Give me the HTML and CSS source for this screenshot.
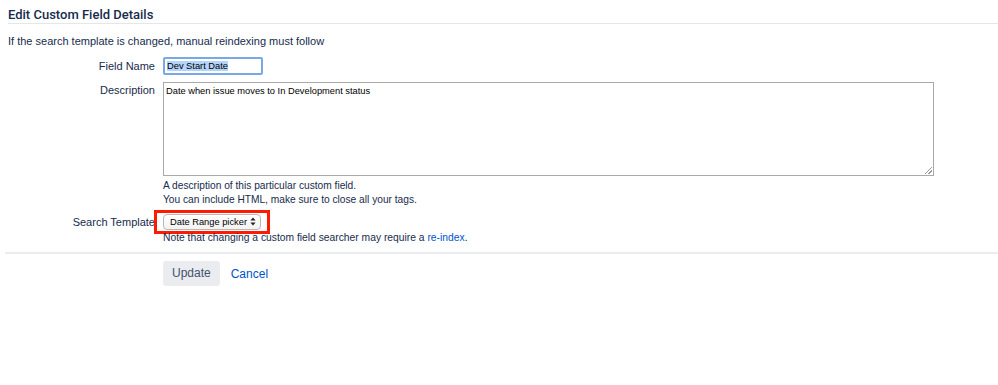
FILE: index.html
```html
<!DOCTYPE html>
<html>
<head>
<meta charset="utf-8">
<link rel="stylesheet" href="styles.css">
</head>
<body>
<div class="page">
  <h2 class="title">Edit Custom Field Details</h2>
  <p class="intro">If the search template is changed, manual reindexing must follow</p>
  <form class="form">
    <div class="row row-name">
      <label class="label">Field Name</label>
      <div class="field"><span class="text-input"><span class="sel">Dev Start Date</span></span></div>
    </div>
    <div class="row row-desc">
      <label class="label">Description</label>
      <div class="field">
        <div class="textarea">Date when issue moves to In Development status<span class="grip"></span></div>
        <div class="help">A description of this particular custom field.<br>You can include HTML, make sure to close all your tags.</div>
      </div>
    </div>
    <div class="row row-search">
      <label class="label">Search Template</label>
      <div class="field">
        <div class="highlight"><span class="select">Date Range picker <span class="arrows"><svg width="6" height="9" viewBox="0 0 6 9"><path d="M3 0.5 L5.6 3.6 H0.4 Z M3 8.5 L5.6 5.4 H0.4 Z" fill="#222"/></svg></span></span></div>
        <div class="note">Note that changing a custom field searcher may require a <a class="link" href="#">re-index</a>.</div>
      </div>
    </div>
    <div class="buttons">
      <span class="btn">Update</span>
      <a class="cancel" href="#">Cancel</a>
    </div>
  </form>
</div>
</body>
</html>
```
FILE: styles.css
```css
html, body { margin: 0; padding: 0; background: #fff; }
body {
  font-family: "Liberation Sans", Arial, sans-serif;
  color: #172b4d;
  font-size: 11px;
}
.page { padding: 0; }
.title {
  margin: 0 0 0 8px;
  padding: 8px 0 2px;
  font-family: Roboto, "Liberation Sans", sans-serif;
  font-size: 13px;
  font-weight: 500;
  line-height: 13px;
  border-bottom: 1px solid #e4e6ea;
  color: #172b4d;
}
.intro {
  margin: 10px 0 0 8px;
  line-height: 14px;
}
.form { margin-top: 9px; }
.row { display: flex; }
.label {
  width: 155px;
  text-align: right;
  flex: none;
  color: #172b4d;
  line-height: 14px;
}
.field { margin-left: 8px; }
.row-name { align-items: center; height: 18px; }
.text-input {
  display: inline-block;
  width: 92px;
  height: 14px;
  line-height: 14px;
  padding: 0 2px;
  font-size: 9.3px;
  color: #000;
  border: 2px solid #7aa7e5;
  border-radius: 2px;
  background: #fff;
}
.sel { background: #b3d4fc; }
.row-desc { margin-top: 7px; }
.row-desc .label { padding-top: 1px; }
.textarea {
  position: relative;
  width: 765px;
  height: 88px;
  border: 1px solid #a9a9a9;
  padding: 2px;
  font-size: 9.3px;
  line-height: 12px;
  color: #000;
}
.grip {
  position: absolute;
  right: 1px;
  bottom: 1px;
  width: 7px;
  height: 7px;
  background: linear-gradient(135deg, transparent 45%, #999 45%, #999 55%, transparent 55%, transparent 70%, #999 70%, #999 80%, transparent 80%);
}
.help {
  margin-top: 3px;
  font-size: 10.2px;
  line-height: 14px;
}
.row-search { margin-top: 3px; }
.row-search .label { padding-top: 5px; }
.row-search .field { margin-left: -1px; }
.highlight {
  display: inline-block;
  border: 3px solid #ff1a00;
  padding: 1px 6px 1px 6px;
  line-height: 0;
}
.select {
  display: inline-block;
  height: 14px;
  line-height: 14px;
  padding: 0 4px 0 6px;
  font-size: 9.3px;
  color: #000;
  border: 1px solid #b8b8b8;
  border-radius: 4px;
  background: linear-gradient(#fff, #f2f2f2);
}
.arrows { display: inline-block; margin-left: 0; vertical-align: -1px; line-height: 0; }
.note {
  margin: -2px 0 0 9px;
  font-size: 10.3px;
  line-height: 12px;
}
.link, .cancel { color: #0052cc; text-decoration: none; }
.buttons {
  margin: 8px 0 0 5px;
  padding: 7px 0 0 158px;
  border-top: 2px solid #ebecf0;
  display: flex;
  align-items: center;
}
.btn {
  display: inline-block;
  background: #ebecf0;
  color: #42526e;
  font-size: 12px;
  line-height: 25px;
  padding: 0 9px;
  border-radius: 3px;
}
.cancel { margin-left: 11px; font-size: 12px; }
```
